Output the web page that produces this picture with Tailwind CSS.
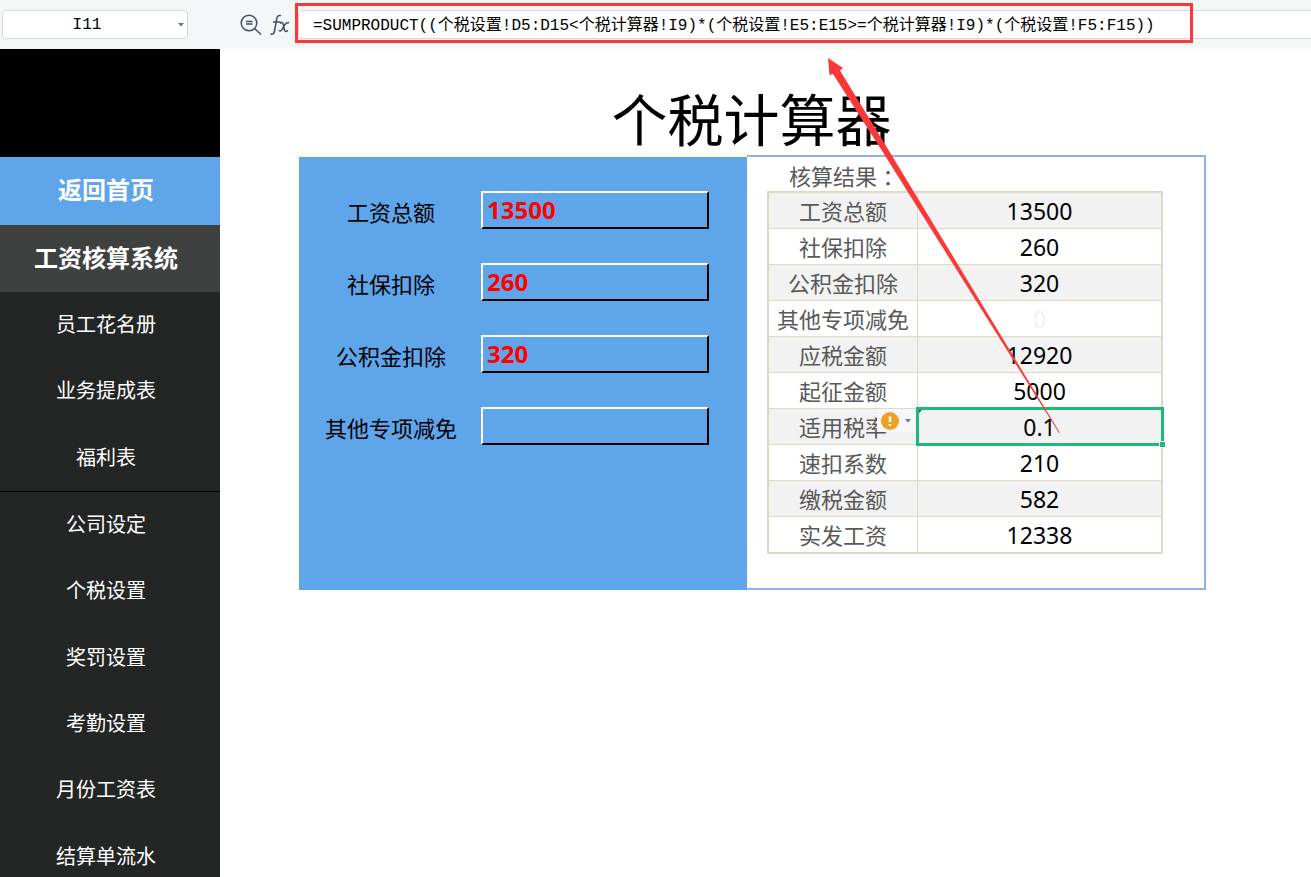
<!DOCTYPE html>
<html lang="zh-CN">
<head>
<meta charset="utf-8">
<title>个税计算器</title>
<meta name="viewport" content="width=device-width, initial-scale=1">
<script src="https://cdn.jsdelivr.net/npm/@tailwindcss/browser@4"></script>
</head>
<body class="relative flex h-screen flex-col overflow-hidden bg-white font-['Noto_Sans','Noto_Sans_CJK_SC',sans-serif] text-black">
<header class="relative flex h-[49px] shrink-0 items-center bg-[#f5f6f8] pl-0.5">
  <div class="flex h-[29px] w-[186px] shrink-0 items-center rounded-sm border border-[#d6d9df] bg-white">
    <input aria-label="名称框" value="I11" class="h-full min-w-0 flex-1 bg-transparent pr-1 text-center font-['Liberation_Mono','Noto_Sans_CJK_SC',monospace] text-[16px] outline-none">
    <button type="button" aria-label="展开名称框" class="flex h-full w-3 items-center justify-center">
      <svg width="6" height="4" viewBox="0 0 6 4" fill="#6b7890"><path d="M0 0h6L3 3.500z"/></svg>
    </button>
  </div>
  <div class="flex w-[110px] shrink-0 items-center justify-end gap-2 pr-2">
    <button type="button" aria-label="浏览公式结果">
      <svg width="22" height="22" viewBox="0 0 22 22" fill="none" stroke="#414e66" stroke-width="1.5"><circle cx="9" cy="9" r="7.800"/><path d="M14.500 14.500L21 20.500M6 7.500h6.500M6 10h6.500"/></svg>
    </button>
    <button type="button" aria-label="插入函数">
      <svg width="20" height="22" viewBox="0 0 20 22" fill="none" stroke="#414e66" stroke-width="1.5" stroke-linecap="round"><path d="M1 20c2 .8 3-.5 3.500-3L6.700 5C7.200 2.300 8.500 1 10.500 1.600M3.500 8h6.500M10.500 9c2-1.200 2.600.3 3 2.500l.8 4c.4 2 1.500 2.500 3.200 1.200M18.500 8.800c-2-.8-3 .5-4.500 3.200l-1.500 2.500c-1 2-2 3-3.200 2.200"/></svg>
    </button>
  </div>
  <input aria-label="编辑栏" value="=SUMPRODUCT((个税设置!D5:D15&lt;个税计算器!I9)*(个税设置!E5:E15&gt;=个税计算器!I9)*(个税设置!F5:F15))" class="h-[29px] min-w-0 flex-1 rounded-l-sm border border-r-0 border-[#d6d9df] bg-white pb-1 pl-[14px] font-['Liberation_Mono','Noto_Sans_CJK_SC',monospace] text-[16px] outline-none">
  <div class="pointer-events-none absolute top-[3px] left-[295px] h-10 w-[898px] border-3 border-[#fb3737]"></div>
</header>

<div class="flex min-h-0 flex-1">
  <nav class="z-10 flex w-[220px] shrink-0 flex-col overflow-hidden bg-[#242525] text-center text-white">
    <div class="h-[108px] shrink-0 bg-black"></div>
    <a href="#" class="flex h-[68px] shrink-0 items-center justify-center bg-[#5fa5ea] pr-2 pb-0.5 text-2xl font-bold">返回首页</a>
    <h2 class="flex h-[67px] shrink-0 items-center justify-center bg-[#3f4040] pr-2 pb-0.5 text-2xl font-bold">工资核算系统</h2>
    <ul class="flex h-[598px] shrink-0 flex-col text-xl">
      <li class="flex-1"><a href="#" class="flex h-full items-center justify-center pr-2">员工花名册</a></li>
      <li class="flex-1"><a href="#" class="flex h-full items-center justify-center pr-2">业务提成表</a></li>
      <li class="flex-1 border-b border-black"><a href="#" class="flex h-full items-center justify-center pr-2">福利表</a></li>
      <li class="flex-1"><a href="#" class="flex h-full items-center justify-center pr-2">公司设定</a></li>
      <li class="flex-1"><a href="#" class="flex h-full items-center justify-center pr-2">个税设置</a></li>
      <li class="flex-1"><a href="#" class="flex h-full items-center justify-center pr-2">奖罚设置</a></li>
      <li class="flex-1"><a href="#" class="flex h-full items-center justify-center pr-2">考勤设置</a></li>
      <li class="flex-1"><a href="#" class="flex h-full items-center justify-center pr-2">月份工资表</a></li>
      <li class="flex-1"><a href="#" class="flex h-full items-center justify-center pr-2">结算单流水</a></li>
    </ul>
  </nav>

  <main class="min-w-0 flex-1 pr-[105px] pl-[77px]">
    <h1 class="flex h-[106px] items-end justify-center text-[56px] leading-[72px]">个税计算器</h1>
    <div class="grid grid-cols-[450fr_459fr]">
      <form class="flex min-w-0 flex-col gap-[34px] border-t-2 border-l-2 border-[#fffbd0] bg-[#5fa5ea] pt-[34px] pr-[38px] pl-[17px] text-[22px]">
        <div class="flex h-[38px] items-center"><label for="f1" class="w-[150px] shrink-0 pt-1 text-center">工资总额</label><input id="f1" value="13500" class="ml-[15px] h-full min-w-0 flex-1 border-2 border-t-white border-r-black border-b-black border-l-white pb-0.5 pl-1 text-2xl font-bold text-[#ff0000] outline-none"></div>
        <div class="flex h-[38px] items-center"><label for="f2" class="w-[150px] shrink-0 pt-1 text-center">社保扣除</label><input id="f2" value="260" class="ml-[15px] h-full min-w-0 flex-1 border-2 border-t-white border-r-black border-b-black border-l-white pb-0.5 pl-1 text-2xl font-bold text-[#ff0000] outline-none"></div>
        <div class="flex h-[38px] items-center"><label for="f3" class="w-[150px] shrink-0 pt-1 text-center">公积金扣除</label><input id="f3" value="320" class="ml-[15px] h-full min-w-0 flex-1 border-2 border-t-white border-r-black border-b-black border-l-white pb-0.5 pl-1 text-2xl font-bold text-[#ff0000] outline-none"></div>
        <div class="flex h-[38px] items-center"><label for="f4" class="w-[150px] shrink-0 pt-1 text-center">其他专项减免</label><input id="f4" value="" class="ml-[15px] h-full min-w-0 flex-1 border-2 border-t-white border-r-black border-b-black border-l-white pb-0.5 pl-1 text-2xl font-bold text-[#ff0000] outline-none"></div>
      </form>
      <section class="min-w-0 border-2 border-l-0 border-[#8fb1e4] pr-[41px] pb-[34px] pl-5">
        <h2 class="flex h-[34px] items-end pl-[22px] text-[22px] leading-[29px] text-[#595959]">核算结果<span class="font-['Noto_Sans_CJK_TC',sans-serif]">：</span></h2>
        <div class="border-2 border-[#ddd9c4]">
          <table class="w-full table-fixed border-separate border-spacing-0 text-center text-[22px] leading-[33px]">
            <colgroup><col class="w-[149px]"><col></colgroup>
            <tbody class="[&_th]:border-r [&_th]:border-b [&_th]:border-[#ddd9c4] [&_th]:p-0 [&_th]:pt-0.5 [&_th]:font-normal [&_th]:text-[#595959] [&_td]:border-b [&_td]:border-[#ddd9c4] [&_td]:p-0 [&_td]:pt-0.5 [&_td]:text-[23px] [&_tr]:h-9 [&_tr:nth-child(odd)]:bg-[#f2f2f2] [&_tr:last-child>*]:border-b-0">
              <tr><th scope="row">工资总额</th><td>13500</td></tr>
              <tr><th scope="row">社保扣除</th><td>260</td></tr>
              <tr><th scope="row">公积金扣除</th><td>320</td></tr>
              <tr><th scope="row">其他专项减免</th><td class="text-[#f2f2f2]">0</td></tr>
              <tr><th scope="row">应税金额</th><td>12920</td></tr>
              <tr><th scope="row">起征金额</th><td>5000</td></tr>
              <tr>
                <th scope="row" class="relative">适用税率
                  <button type="button" aria-label="错误检查选项" class="absolute top-0 right-0.5 flex h-[23px] w-[38px] items-center gap-1.5 bg-[#f5f7fa] pl-1">
                    <svg width="18" height="18" viewBox="0 0 18 18"><circle cx="9" cy="9" r="9" fill="#eda124"/><path d="M9 4.500v5.500M9 12v2" stroke="#fff" stroke-width="2.500"/></svg>
                    <svg width="6" height="4" viewBox="0 0 6 4" fill="#6b7890"><path d="M0 0h6L3 3.500z"/></svg>
                  </button>
                </th>
                <td class="relative">0.1
                  <span class="pointer-events-none absolute -top-[2px] -right-[3px] -bottom-[2px] -left-[2px] border-3 border-[#21b77c]">
                    <span class="absolute top-0 left-0 size-0 border-t-3 border-r-3 border-t-[#0b7a2f] border-r-transparent"></span>
                    <span class="absolute -right-[5px] -bottom-[5px] size-[7px] border border-white bg-[#21b77c]"></span>
                  </span>
                </td>
              </tr>
              <tr><th scope="row">速扣系数</th><td>210</td></tr>
              <tr><th scope="row">缴税金额</th><td>582</td></tr>
              <tr class="[&&]:h-[35px]"><th scope="row">实发工资</th><td>12338</td></tr>
            </tbody>
          </table>
        </div>
      </section>
    </div>
  </main>
</div>

<!-- Callout arrow from the rate cell up to the formula bar -->
<svg class="pointer-events-none absolute top-[58px] left-[828px] z-20" width="233" height="376" viewBox="0 0 233 376" fill="#fb3737" aria-hidden="true"><path d="M0 0L15 10L12 12.500L60.500 92L232 375L231 375L53.500 92L5 16L1.500 17z"/></svg>
</body>
</html>
